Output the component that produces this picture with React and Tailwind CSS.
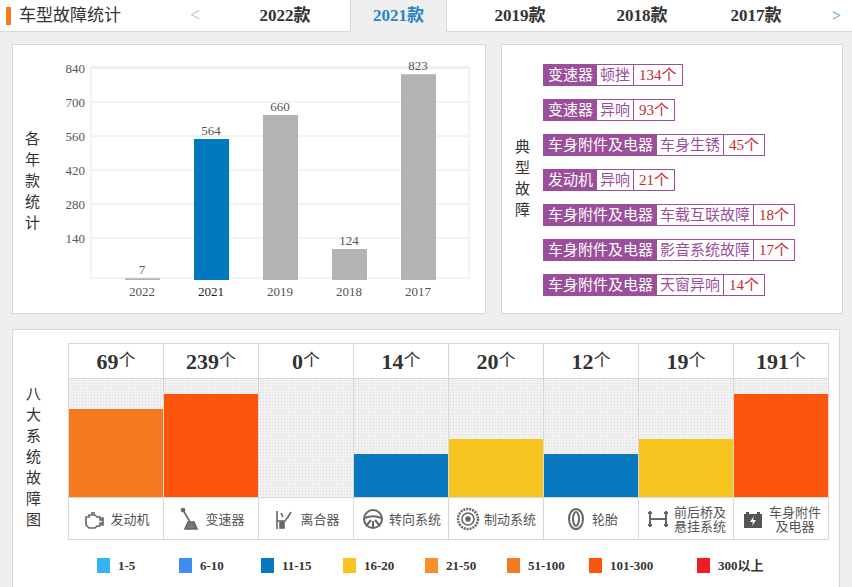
import React from "react";

const F = { fontFamily: '"Liberation Serif","Noto Sans CJK SC",serif' };
const years = [["2022",7],["2021",564],["2019",660],["2018",124],["2017",823]];
const faults = [
  ["变速器","顿挫","134个"],["变速器","异响","93个"],["车身附件及电器","车身生锈","45个"],
  ["发动机","异响","21个"],["车身附件及电器","车载互联故障","18个"],["车身附件及电器","影音系统故障","17个"],["车身附件及电器","天窗异响","14个"],
];
const sys = [
  ["69","发动机",88,"#f47a20"],["239","变速器",103,"#fb540c"],["0","离合器",0,""],["14","转向系统",43,"#0878bf"],
  ["20","制动系统",58,"#f8c520"],["12","轮胎",43,"#0878bf"],["19","前后桥及\n悬挂系统",58,"#f8c520"],["191","车身附件\n及电器",103,"#fb540c"],
];
const legend = [["1-5","#33b5f3"],["6-10","#3d8ef0"],["11-15","#0878bf"],["16-20","#f8c520"],["21-50","#f7902a"],["51-100","#f47a20"],["101-300","#fb540c"],["300以上","#ee1c25"]];

function Icon({ i }) {
  const s = { stroke: "#666", fill: "none", strokeWidth: 1.6 };
  const icons = [
    <g {...s}><path d="M4 10h3v-2h6l2 2h3v3h2v-2h1v7h-1v-2h-2v3h-3l-2 2H7l-3-3z" /><path d="M9 6h4" /></g>,
    <g {...s}><path d="M6 3l7 12" /><circle cx="6" cy="3" r="1.5" fill="#666" /><path d="M8 22h12l-3-7h-6z" fill="#777" /></g>,
    <g {...s}><path d="M5 4v18M5 14h8l3-4M16 10l3-5M9 6l2 4" /><rect x="8" y="15" width="4" height="6" fill="#666" /></g>,
    <g {...s} strokeWidth="2"><circle cx="12" cy="12" r="9" /><path d="M3.5 11c5-2 12-2 17 0M12 14v7M10 13l-5 6M14 13l5 6" /></g>,
    <g {...s}><circle cx="12" cy="12" r="10" strokeDasharray="2 1" strokeWidth="2.5" /><circle cx="12" cy="12" r="6" /><circle cx="12" cy="12" r="2" fill="#666" /></g>,
    <g {...s} strokeWidth="2"><ellipse cx="12" cy="12" rx="7" ry="10" /><ellipse cx="12" cy="12" rx="3" ry="7" /></g>,
    <g {...s} strokeWidth="2"><path d="M4 4v16M20 4v16M4 12h16M2 6h4M18 6h4M2 18h4M18 18h4" /></g>,
    <g><rect x="3" y="7" width="18" height="14" fill="#555" /><rect x="5" y="5" width="3" height="2" fill="#555" /><rect x="16" y="5" width="3" height="2" fill="#555" /><path d="M13 9l-4 6h3l-1 4 4-6h-3z" fill="#fff" /></g>,
  ];
  return <svg width="24" height="24" viewBox="0 0 24 24" className="shrink-0">{icons[i]}</svg>;
}

export default function App() {
  return (
    <div className="w-[852px] h-[587px] bg-[#efefef] overflow-hidden" style={F}>
      <div className="h-[32px] bg-white flex items-stretch border-b border-[#d8d8d8]">
        <div className="flex items-center w-[190px] pl-[6px]">
          <div className="w-[5px] h-[18px] bg-[#f47a20] mr-[8px]" />
          <span className="text-[17px] text-[#333]">车型故障统计</span>
        </div>
        <div className="w-[30px] flex items-center text-[#bbb] text-[18px]">&lt;</div>
        <div className="w-[130px] flex items-center justify-center font-bold text-[17px] text-[#333]">2022款</div>
        <div className="w-[97px] -mb-px bg-[#efefef] border-x border-[#d8d8d8] flex items-center justify-center font-bold text-[17px] text-[#2a85c6]">2021款</div>
        <div className="w-[146px] flex items-center justify-center font-bold text-[17px] text-[#333]">2019款</div>
        <div className="w-[98px] flex items-center justify-center font-bold text-[17px] text-[#333]">2018款</div>
        <div className="w-[130px] flex items-center justify-center font-bold text-[17px] text-[#333]">2017款</div>
        <div className="flex-1 flex items-center justify-center text-[#3a8fd0] text-[16px]">&gt;</div>
      </div>
      <div className="flex gap-[15px] pl-[12px] pr-[9px] pt-[12px]">
        <div className="w-[474px] h-[270px] bg-white border border-[#d8d8d8] relative shrink-0">
          <div className="absolute left-[12px] top-[84px] w-[18px] text-[15px] text-[#333] leading-[21px]">各年款统计</div>
          <svg width="474" height="270" className="absolute left-0 top-0" style={F}>
            <rect x="78" y="22" width="378" height="211" fill="none" stroke="#e6e6e6" />
            {[0,1,2,3,4,5].map(k => {
              const y = 23 + k * 34;
              return <g key={k}><line x1="78" x2="456" y1={y} y2={y} stroke="#e6e6e6" /><text x="72" y={y + 5} fontSize="13" fill="#555" textAnchor="end">{840 - k * 140}</text></g>;
            })}
            {years.map(([y, v], i) => {
              const cx = 129 + i * 69; const h = Math.max(v * 0.25, 1);
              return <g key={y}>
                <rect x={cx - 17} y={235 - h} width="35" height={h} fill={i === 1 ? "#0079be" : "#b3b3b3"} />
                <text x={cx} y={231 - h} fontSize="13" fill="#555" textAnchor="middle">{v}</text>
                <text x={cx} y={251} fontSize="13" fill={i === 1 ? "#222" : "#555"} textAnchor="middle">{y}</text>
              </g>;
            })}
          </svg>
        </div>
        <div className="flex-1 h-[270px] bg-white border border-[#d8d8d8] flex items-center">
          <div className="w-[18px] ml-[13px] mr-[10px] text-[15px] leading-[21px] text-[#333]">典型故障</div>
          <div className="flex flex-col gap-[13px] pt-[2px]">
            {faults.map((f, i) => (
              <div key={i} className="flex h-[22px] border border-[#9b4f9b] w-max text-[15px] leading-[20px]">
                <span className="bg-[#9b4f9b] text-white px-[4px]">{f[0]}</span>
                <span className="text-[#9b4f9b] px-[3px] border-r border-[#9b4f9b]">{f[1]}</span>
                <span className="text-[#c8262e] px-[5px]">{f[2]}</span>
              </div>
            ))}
          </div>
        </div>
      </div>
      <div className="mx-[12px] mt-[15px] h-[260px] bg-white border border-[#d8d8d8] flex">
        <div className="w-[55px] shrink-0 pt-[54px] pl-[13px]">
          <div className="w-[16px] text-[15px] leading-[21px] text-[#333]">八大系统故障图</div>
        </div>
        <div className="w-[761px] shrink-0">
          <div className="mt-[13px] flex border-l border-t border-[#d8d8d8]">
            {sys.map(([n, name, h, c], i) => (
              <div key={i} className="w-[95px] shrink-0 border-r border-[#d8d8d8] flex flex-col">
                <div className="h-[35px] flex items-center justify-center text-[#333] border-b border-[#d8d8d8]">
                  <span className="text-[22px] font-bold">{n}</span><span className="text-[17px]">个</span>
                </div>
                <div className="h-[118px] flex flex-col justify-end bg-[#f1f1f1] bg-[radial-gradient(#dcdcdc_0.6px,transparent_0.7px)] bg-[length:3px_3px]">
                  {h > 0 && <div style={{ height: h, background: c }} />}
                </div>
                <div className="h-[43px] border-b border-t border-[#d8d8d8] flex items-center justify-center gap-[4px] text-[13px] text-[#555] leading-[14px]" style={{ fontFamily: '"Noto Sans CJK SC",sans-serif' }}>
                  <Icon i={i} />
                  <span className="whitespace-pre text-center">{name}</span>
                </div>
              </div>
            ))}
          </div>
          <div className="flex mt-[16px] ml-[29px] text-[13px] text-[#333] font-bold">
            {legend.map(([l, c], i) => (
              <div key={l} className={`${i === 6 ? "w-[108px]" : "w-[82px]"} shrink-0 flex items-center gap-[8px]`}>
                <div className="w-[13px] h-[15px]" style={{ background: c }} />{l}
              </div>
            ))}
          </div>
        </div>
      </div>
    </div>
  );
}
